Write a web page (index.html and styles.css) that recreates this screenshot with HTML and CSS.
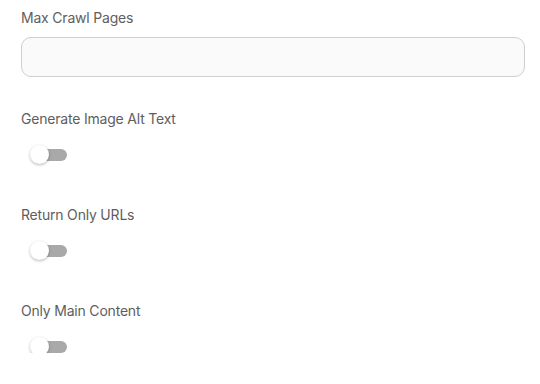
FILE: index.html
```html
<!DOCTYPE html>
<html lang="en">
<head>
    <meta charset="UTF-8">
    <meta name="viewport" content="width=device-width, initial-scale=1.0">
    <title>Crawl Options</title>
    <link rel="stylesheet" href="styles.css">
</head>
<body>
    <div class="options">
        <div class="field">
            <label for="maxPages">Max Crawl Pages</label>
            <input type="text" id="maxPages">
        </div>

        <div class="field">
            <label>Generate Image Alt Text</label>
            <span class="toggle"><span class="knob"></span></span>
        </div>

        <div class="field">
            <label>Return Only URLs</label>
            <span class="toggle"><span class="knob"></span></span>
        </div>

        <div class="field">
            <label>Only Main Content</label>
            <span class="toggle"><span class="knob"></span></span>
        </div>
    </div>
</body>
</html>
```

FILE: styles.css
```css
* {
    margin: 0;
    padding: 0;
    box-sizing: border-box;
}

body {
    font-family: 'Inter', 'Noto Sans', sans-serif;
    background: #fff;
    color: #5e5e5e;
    padding: 8px 15px 0 21px;
}

.options {
    display: flex;
    flex-direction: column;
    gap: 32px;
}

.field {
    display: flex;
    flex-direction: column;
    align-items: flex-start;
}

label {
    font-size: 14px;
    line-height: 20px;
    letter-spacing: -0.2px;
}

input {
    margin-top: 9px;
    width: 100%;
    height: 40px;
    border: 1px solid #cfcfcf;
    border-radius: 10px;
    background: #fafafa;
    font-size: 14px;
    padding: 0 12px;
}

input:focus {
    outline: none;
}

.toggle {
    position: relative;
    margin: 20px 0 0 10px;
    width: 36px;
    height: 12px;
    border-radius: 6px;
    background: #a9a9a9;
    display: block;
}

.field:not(:last-child) .toggle {
    margin-bottom: 12px;
}

.knob {
    position: absolute;
    left: -1px;
    top: -4px;
    width: 19px;
    height: 19px;
    border-radius: 50%;
    background: #fff;
    box-shadow: 0 1px 3px rgba(0, 0, 0, 0.3);
}
```
